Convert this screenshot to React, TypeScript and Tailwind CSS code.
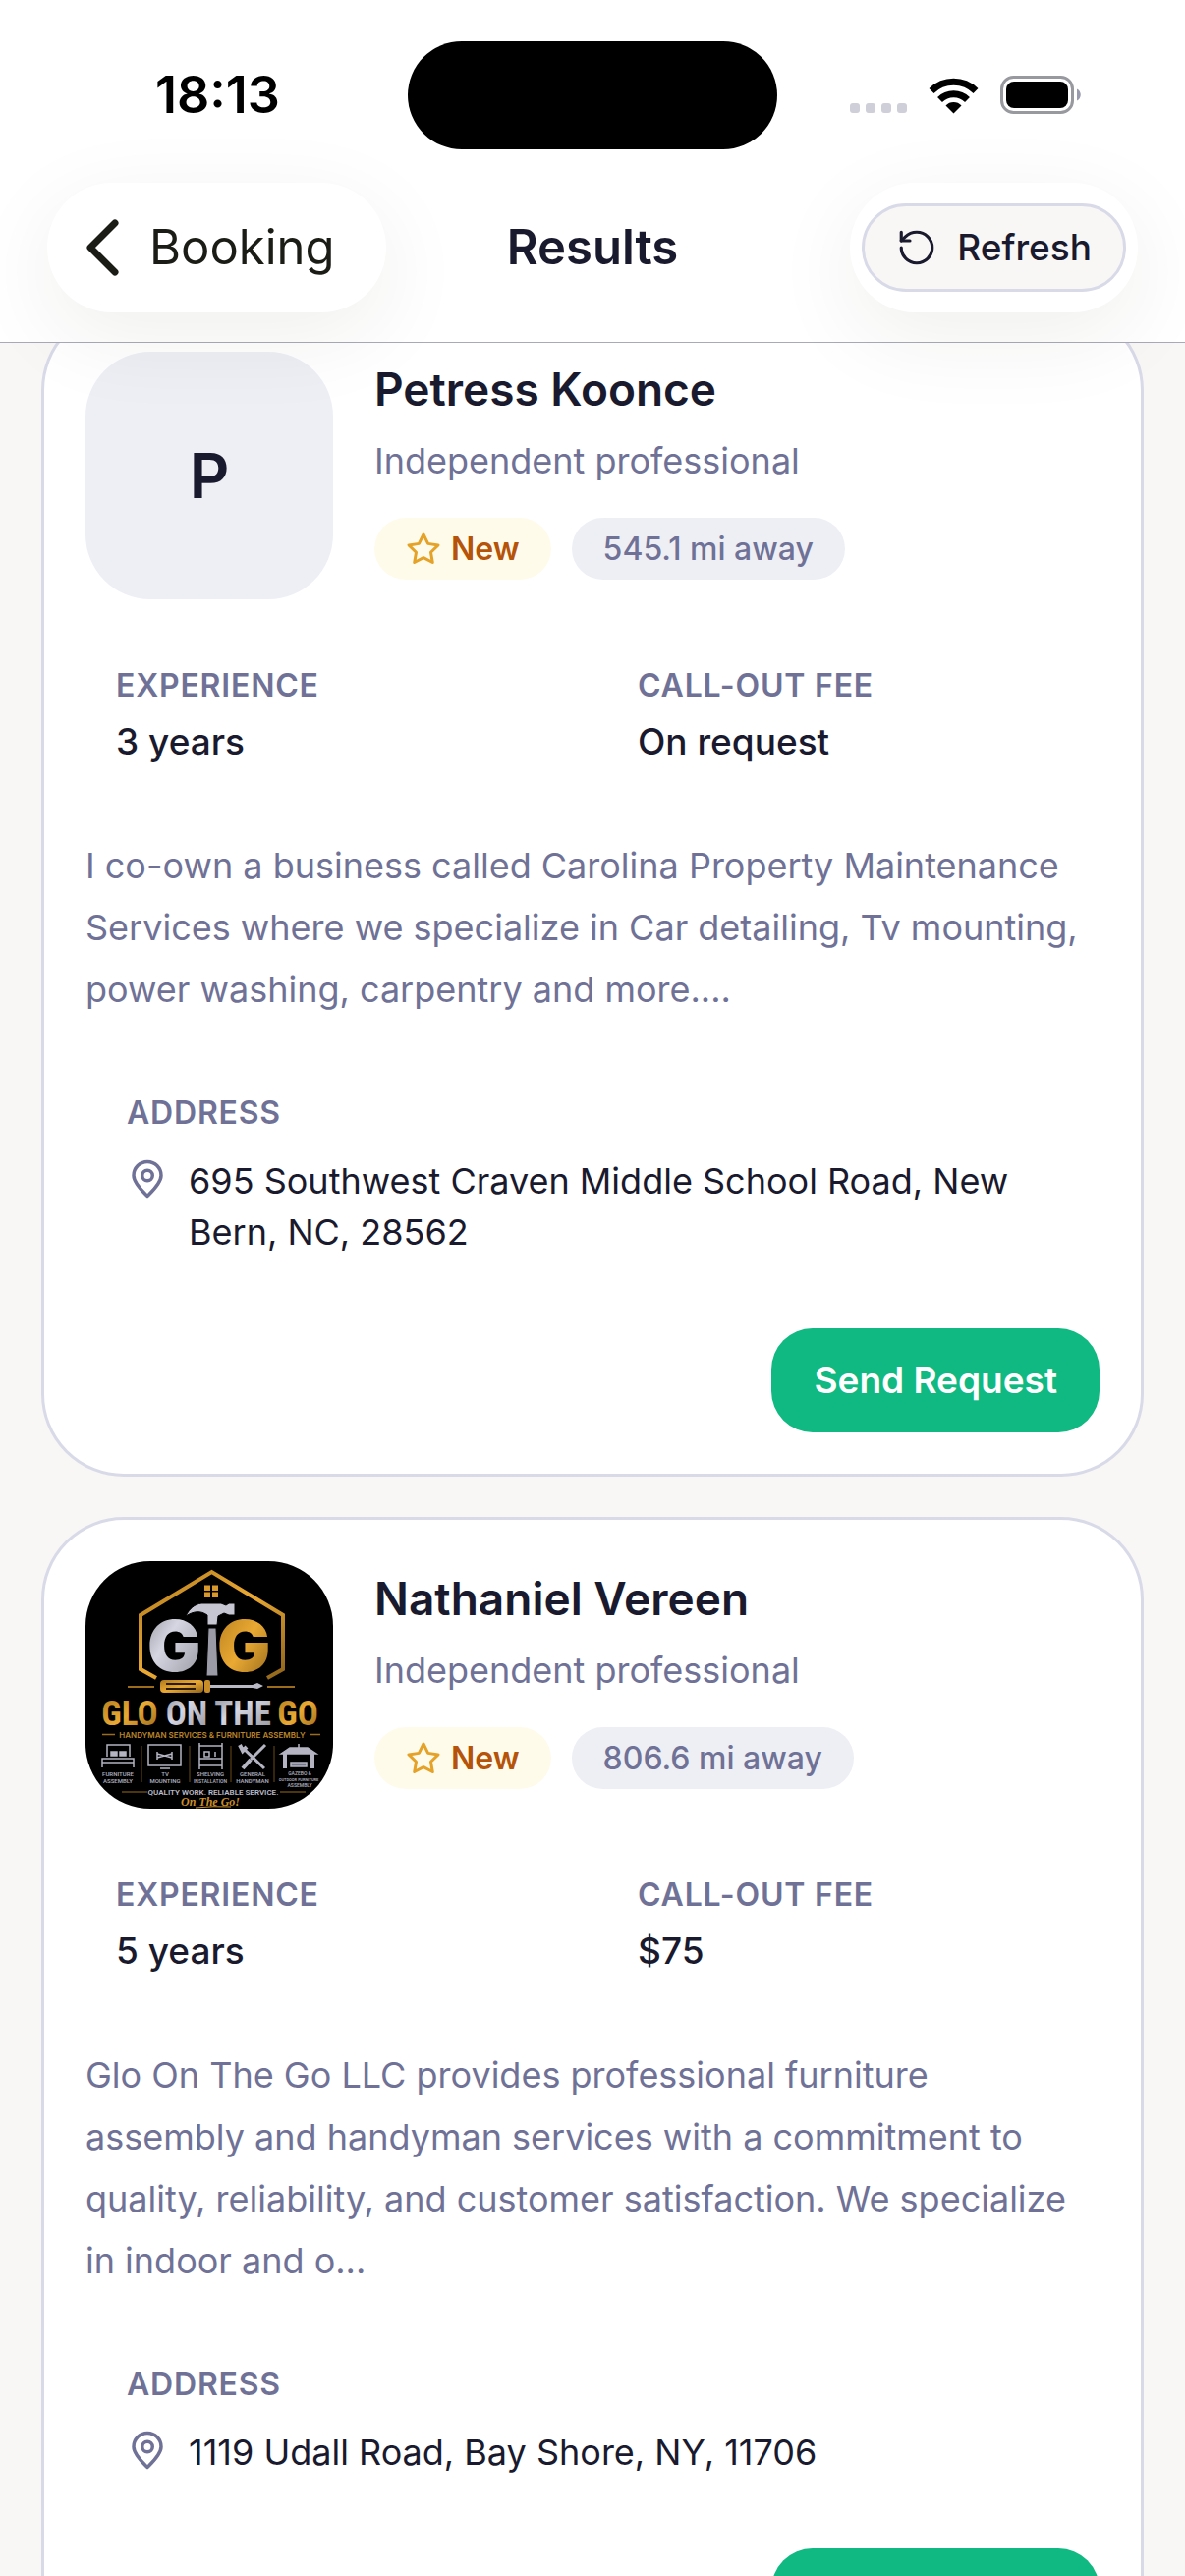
import React from "react";

type Professional = {
  name: string;
  kind: string;
  distance: string;
  experience: string;
  fee: string;
  bio: string;
  address: string;
  logo?: boolean;
};

const professionals: Professional[] = [
  {
    name: "Petress Koonce",
    kind: "Independent professional",
    distance: "545.1 mi away",
    experience: "3 years",
    fee: "On request",
    bio: "I co-own a business called Carolina Property Maintenance Services where we specialize in Car detailing, Tv mounting, power washing, carpentry and more....",
    address: "695 Southwest Craven Middle School Road, New Bern, NC, 28562",
  },
  {
    name: "Nathaniel Vereen",
    kind: "Independent professional",
    distance: "806.6 mi away",
    experience: "5 years",
    fee: "$75",
    bio: "Glo On The Go LLC provides professional furniture assembly and handyman services with a commitment to quality, reliability, and customer satisfaction. We specialize in indoor and o...",
    address: "1119 Udall Road, Bay Shore, NY, 11706",
    logo: true,
  },
];

const StarIcon = () => (
  <svg className="size-9 text-[#e5a229]" viewBox="0 0 24 24" fill="none" stroke="currentColor" strokeWidth="2" strokeLinecap="round" strokeLinejoin="round" aria-hidden="true">
    <polygon points="12 2 15.09 8.26 22 9.27 17 14.14 18.18 21.02 12 17.77 5.82 21.02 7 14.14 2 9.27 8.91 8.26 12 2" />
  </svg>
);

const PinIcon = () => (
  <svg className="mt-[3px] size-[42px] shrink-0 text-[#6f7296]" viewBox="0 0 24 24" fill="none" stroke="currentColor" strokeWidth="2" strokeLinecap="round" strokeLinejoin="round" aria-hidden="true">
    <path d="M20 10c0 4.400-5.500 9.500-8 12-2.500-2.500-8-7.600-8-12a8 8 0 0 1 16 0Z" />
    <circle cx="12" cy="10" r="3" />
  </svg>
);

const RefreshIcon = () => (
  <svg className="size-[42px]" viewBox="0 0 24 24" fill="none" stroke="currentColor" strokeWidth="1.8" strokeLinecap="round" strokeLinejoin="round" aria-hidden="true">
    <path d="M3 12a9 9 0 1 0 9-9 9.75 9.75 0 0 0-6.74 2.74L3 8" />
    <path d="M3 3v5h5" />
  </svg>
);

const StatusIcons = () => (
  <svg className="h-10 w-[236px]" viewBox="0 0 236 40" aria-hidden="true">
    <g fill="#cfcfda">
      <rect x="0" y="28" width="10" height="10" rx="3" />
      <rect x="16" y="28" width="10" height="10" rx="3" />
      <rect x="32" y="28" width="10" height="10" rx="3" />
      <rect x="48" y="28" width="10" height="10" rx="3" />
    </g>
    {/* wifi */}
    <path d="M105.500 38.500l-8-8a11 11 0 0 1 16 0z" />
    <path d="M91.500 24.500a20 20 0 0 1 28 0M83 15.500a32 32 0 0 1 45 0" fill="none" stroke="#000" strokeWidth="7" />
    {/* battery */}
    <rect x="154.500" y="1.500" width="72" height="36" rx="12" fill="none" stroke="#98989f" strokeWidth="3" />
    <rect x="159" y="6" width="63" height="27" rx="8" />
    <path d="M231 13.500c5 2 5 10 0 12z" fill="#9a9aae" />
  </svg>
);

const GloLogo = () => (
  <svg className="size-full" viewBox="0 0 252 252" role="img" aria-label="Glo On The Go logo">
    <defs>
      <linearGradient id="gold" x1="0" y1="0" x2="1" y2="1">
        <stop offset="0" stopColor="#b07a1c" />
        <stop offset="0.5" stopColor="#eaa933" />
        <stop offset="1" stopColor="#8f641a" />
      </linearGradient>
      <linearGradient id="silver" x1="0" y1="0" x2="1" y2="1">
        <stop offset="0" stopColor="#8f8f99" />
        <stop offset="0.4" stopColor="#d6d6e2" />
        <stop offset="1" stopColor="#92929c" />
      </linearGradient>
    </defs>
    <rect width="252" height="252" fill="#000" />

    {/* house outline */}
    <path d="M72 119l-16-9V55L128.500 11 201 55v55l-16 9" fill="none" stroke="url(#gold)" strokeWidth="4" />
    <g fill="#d9982c">
      <rect x="121" y="24.500" width="6" height="5.500" />
      <rect x="129" y="24.500" width="6" height="5.500" />
      <rect x="121" y="31.500" width="6" height="5.500" />
      <rect x="129" y="31.500" width="6" height="5.500" />
    </g>

    <g fontFamily="Inter, sans-serif" fontWeight="900" fontSize="72">
      <text x="63" y="112" fill="url(#silver)">G</text>
      <text x="134" y="112" fill="url(#gold)">G</text>
    </g>

    {/* hammer */}
    <path d="M102 56c4-8 9-12 16-13h20l5 2 3-2h6v12h-6l-5-2-6 3-1 9h-10v-10c-7-5-14-4-22 1z" fill="#c6c6d2" stroke="#000" />
    <path d="M125 68h8l2 49h-12z" fill="#9b9ba7" stroke="#000" />

    {/* screwdriver */}
    <rect x="76" y="121" width="44" height="13" rx="4" fill="url(#gold)" />
    <path d="M82 125h30M82 130h30" stroke="#2a1b04" strokeWidth="2" />
    <rect x="121" y="121" width="6" height="13" rx="2" fill="#c98d28" />
    <path d="M127 126h43l5-2 6 3-6 3-5-1h-43z" fill="#b9b9c6" />
    <path d="M43 128h27M185 128h28" stroke="#9a6c1c" strokeWidth="2" />

    <g fontFamily="'Liberation Sans Narrow', 'Roboto Condensed', 'Open Sans Condensed', 'DejaVu Sans Condensed', sans-serif" fontWeight="700" fontSize="35" textAnchor="middle">
      <text x="45" y="167" fill="url(#gold)">GLO</text>
      <text x="103" y="167" fill="url(#silver)">ON</text>
      <text x="160" y="167" fill="url(#silver)">THE</text>
      <text x="216" y="167" fill="url(#gold)">GO</text>
    </g>

    <text x="129" y="180" fill="#b98428" fontFamily="Inter, sans-serif" fontWeight="600" fontSize="8" textAnchor="middle">
      HANDYMAN SERVICES &amp; FURNITURE ASSEMBLY
    </text>
    <path d="M17 176.500h13M228 176.500h11" stroke="#9a6c1c" strokeWidth="1.500" />

    {/* services */}
    <g fill="none" stroke="#b4b4c2" strokeWidth="1.500">
      <path d="M22 199v-12h23v12M17 210v-9h32v9M17 205h32" />
      <path d="M26 194h6v4h-6zM35 194h6v4h-6z" fill="#b4b4c2" />
      <path d="M64 187h33v21H64zM76 211h10M73 194v8M88 194v8M73 196l15 4M73 200l15-4" />
      <path d="M116 185v27M139 185v27M116 188h23M116 201h23M116 208h23M121 194h5v5h-5zM132 199v-5" />
      <path d="M183 187l-15 15M160 190l22 21" strokeWidth="3" />
      <path d="M168 202l-8 9M157 187l3 6 4-4" strokeWidth="4" />
      <path d="M199 196l9-6h18l9 6z" fill="#b4b4c2" />
      <path d="M203 196v15M231 196v15" strokeWidth="4" />
      <path d="M217 190v-4" />
      <path d="M209 209v-4h16v4z" fill="#77778a" />
    </g>
    <path d="M57 188v37M106 188v37M148 188v37M192 188v37" stroke="#6b4b14" />
    <g fill="#a9a9b8" fontFamily="Roboto, sans-serif" fontWeight="600" fontSize="6" textAnchor="middle">
      <text x="33" y="219">FURNITURE</text>
      <text x="33" y="226">ASSEMBLY</text>
      <text x="81" y="219">TV</text>
      <text x="81" y="226">MOUNTING</text>
      <text x="127" y="219">SHELVING</text>
      <text x="127" y="226" fontSize="5">INSTALLATION</text>
      <text x="170" y="219">GENERAL</text>
      <text x="170" y="226">HANDYMAN</text>
      <text x="218" y="218" fontSize="5">GAZEBO &amp;</text>
      <text x="217" y="224" fontSize="4">OUTDOOR FURNITURE</text>
      <text x="218" y="230" fontSize="5">ASSEMBLY</text>
    </g>
    <text x="130" y="238" fill="#b9b9c6" fontFamily="Roboto, sans-serif" fontWeight="600" fontSize="8" textAnchor="middle">
      QUALITY WORK. RELIABLE SERVICE.
    </text>
    <path d="M37 235h26M198 235h26" stroke="#9a6c1c" />
    <text x="127" y="249" fill="#c98d28" fontFamily="'Liberation Serif', serif" fontStyle="italic" fontSize="12" textAnchor="middle">
      On The Go!
    </text>
    <path d="M112 251q18-2 36-1" fill="none" stroke="#c98d28" />
  </svg>
);

const Header = () => {
  return (
    <header className="relative z-10 border-b border-[#a9a9ba] bg-white pt-[42px] pb-[30px]">
      <div className="grid grid-cols-[1fr_auto_1fr] items-center">
        <span className="pl-[158px] text-[52px] leading-none font-semibold text-black">18:13</span>
        <div className="h-[110px] w-[376px] rounded-full bg-black" />
        <div className="flex justify-end pr-[105px]">
          <StatusIcons />
        </div>
      </div>

      <nav className="mt-[34px] grid grid-cols-[1fr_auto_1fr] items-center px-12">
        <button className="flex h-[132px] items-center gap-[28px] justify-self-start rounded-full bg-white pr-[52px] pl-9 text-[49px] text-[#1c1c16] shadow-[0_24px_90px_rgba(40,40,20,0.07)]">
          <svg className="h-[60px] w-[40px]" viewBox="0 0 40 60" fill="none" stroke="currentColor" strokeWidth="7" strokeLinecap="round" strokeLinejoin="round" aria-hidden="true">
            <path d="M33 5 8 30l25 25" />
          </svg>
          Booking
        </button>
        <h1 className="text-[49px] font-semibold">Results</h1>
        <div className="flex h-[132px] items-center justify-self-end rounded-full bg-white px-3 shadow-[0_24px_90px_rgba(40,40,20,0.07)]">
          <button className="flex h-[90px] items-center gap-5 rounded-full border-3 border-[#d8dae8] bg-[#f8f7f5] px-8 text-[37px] font-medium">
            <RefreshIcon />
            Refresh
          </button>
        </div>
      </nav>
    </header>
  );
};

const Stat = ({ label, value }: { label: string; value: string }) => (
  <div className="px-[31px] pt-6 pb-[27px]">
    <dt className="text-[32px] leading-[44px] font-semibold tracking-wide text-[#6f7296] uppercase">{label}</dt>
    <dd className="mt-[9px] text-[37px] leading-[52px] font-medium">{value}</dd>
  </div>
);

const ProfessionalCard = ({ pro }: { pro: Professional }) => {
  return (
    <article className="flex flex-col gap-[42px] rounded-[84px] border-3 border-[#d8dae8] bg-white p-[42px]">
      <div className="flex gap-[42px]">
        <div className="flex size-[252px] shrink-0 items-center justify-center overflow-hidden rounded-[66px] bg-[#eeeff5] text-[63px] font-semibold">
          {pro.logo ? <GloLogo /> : pro.name[0]}
        </div>
        <div className="pt-[6px]">
          <h2 className="text-[46px] leading-[64px] font-semibold">{pro.name}</h2>
          <p className="mt-[15px] text-[36px] leading-[52px] text-[#6f7296]">{pro.kind}</p>
          <div className="mt-8 flex gap-[21px]">
            <span className="flex h-[63px] items-center gap-2.5 rounded-full bg-[#fffbeb] px-8 text-[32px] font-semibold text-[#b45309]">
              <StarIcon />
              New
            </span>
            <span className="flex h-[63px] items-center rounded-full bg-[#eeeff5] px-8 text-[32px] font-medium text-[#6f7296]">
              {pro.distance}
            </span>
          </div>
        </div>
      </div>

      <dl className="grid grid-cols-2 gap-[30px]">
        <Stat label="Experience" value={pro.experience} />
        <Stat label="Call-out fee" value={pro.fee} />
      </dl>

      <p className="pr-2 text-[36px] leading-[63px] text-[#6f7296]">{pro.bio}</p>

      <div className="px-[42px] py-[30px]">
        <h3 className="text-[32px] leading-[44px] font-semibold tracking-wide text-[#6f7296] uppercase">Address</h3>
        <div className="mt-[21px] flex gap-[21px]">
          <PinIcon />
          <address className="text-[36px] leading-[52px] not-italic">{pro.address}</address>
        </div>
      </div>

      <button className="h-[106px] self-end rounded-[42px] bg-[#10b981] px-[43px] text-[37px] font-semibold text-white">
        Send Request
      </button>
    </article>
  );
};

const App = () => {
  return (
    <div className="flex h-screen flex-col overflow-hidden bg-[#f8f7f5] font-[Inter,sans-serif] text-[#1a1a2e]">
      <Header />
      {/* the list is scrolled a little way under the header */}
      <main className="-mt-9 flex-1 space-y-[41px] overflow-y-auto px-[42px] pb-[42px] [scrollbar-width:none]">
        {professionals.map((pro) => (
          <ProfessionalCard pro={pro} key={pro.name} />
        ))}
      </main>
    </div>
  );
};

export default App;
